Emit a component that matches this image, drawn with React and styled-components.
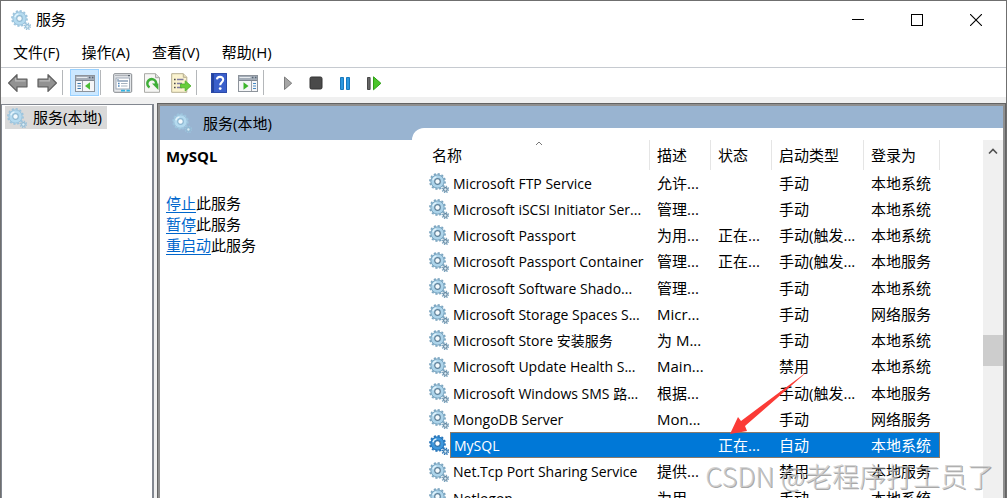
import React, { useState } from "react";
import styled, { createGlobalStyle } from "styled-components";

const services = [
  { name: "Microsoft FTP Service", desc: "允许...", state: "", start: "手动", logon: "本地系统" },
  { name: "Microsoft iSCSI Initiator Ser...", desc: "管理...", state: "", start: "手动", logon: "本地系统" },
  { name: "Microsoft Passport", desc: "为用...", state: "正在...", start: "手动(触发...", logon: "本地系统" },
  { name: "Microsoft Passport Container", desc: "管理...", state: "正在...", start: "手动(触发...", logon: "本地服务" },
  { name: "Microsoft Software Shado...", desc: "管理...", state: "", start: "手动", logon: "本地系统" },
  { name: "Microsoft Storage Spaces S...", desc: "Micr...", state: "", start: "手动", logon: "网络服务" },
  { name: "Microsoft Store 安装服务", desc: "为 M...", state: "", start: "手动", logon: "本地系统" },
  { name: "Microsoft Update Health S...", desc: "Main...", state: "", start: "禁用", logon: "本地系统" },
  { name: "Microsoft Windows SMS 路...", desc: "根据...", state: "", start: "手动(触发...", logon: "本地服务" },
  { name: "MongoDB Server", desc: "Mon...", state: "", start: "手动", logon: "网络服务" },
  { name: "MySQL", desc: "", state: "正在...", start: "自动", logon: "本地系统" },
  { name: "Net.Tcp Port Sharing Service", desc: "提供...", state: "", start: "禁用", logon: "本地服务" },
  { name: "Netlogon", desc: "为用...", state: "", start: "手动", logon: "本地系统" },
];

function Gear({ active, faded }) {
  const teeth = active ? "#2674b8" : faded ? "#9cc3dc" : "#7aa4bf";
  const body = active ? "#3d97dd" : faded ? "#b4daef" : "#add4ea";
  const inner = active ? "#2a6ea8" : faded ? "#8fb9d3" : "#5b7f99";
  return (
    <GearSvg viewBox="0 0 20 20" aria-hidden="true">
      <circle cx="8.5" cy="8.5" r="7.4" fill="none" stroke={teeth} strokeWidth="2" strokeDasharray="2.1 1.77" />
      <circle cx="8.5" cy="8.5" r="5" fill="none" stroke={body} strokeWidth="4" />
      <circle cx="8.5" cy="8.5" r="6.6" fill="none" stroke={teeth} strokeWidth="1" />
      <circle cx="8.5" cy="8.5" r="2.8" fill={active ? "#fff" : "#f4fafd"} stroke={inner} strokeWidth="1.2" />
      <path d="M3.8 7.2a5 5 0 0 1 3.6-3.4" fill="none" stroke="#e6f5fc" strokeWidth="1.3" />
      <circle cx="16.4" cy="16.4" r="3" fill="none" stroke={teeth} strokeWidth="1.6" strokeDasharray="1.3 1.05" />
      <circle cx="16.4" cy="16.4" r="1.8" fill="#dceef7" stroke={inner} strokeWidth="1.1" />
    </GearSvg>
  );
}

function ArrowIcon({ right }) {
  return (
    <svg width="20" height="20" viewBox="0 0 20 20">
      <path
        d={right ? "M19.4 10L11 1.6v4.6H1v7.6h10v4.6z" : "M.6 10L9 1.6v4.6h10v7.6H9v4.6z"}
        fill="#929292"
        stroke="#5f5f5f"
        strokeWidth="1.2"
        strokeLinejoin="round"
      />
      <path d={right ? "M2.5 7.8h9.8V5" : "M17.5 7.8H7.7V5"} fill="none" stroke="#bcbcbc" strokeWidth="1.2" />
    </svg>
  );
}

// window frame with a side pane, used by the two "show pane" buttons
function PaneIcon({ flip }) {
  return (
    <svg width="20" height="20" viewBox="0 0 20 20">
      <rect x="0.5" y="2.5" width="19" height="16" fill="#f5f6f8" stroke="#8d939b" />
      <rect x="1" y="3" width="18" height="4" fill="#a4adb8" />
      <path d="M1.5 4.5h11" stroke="#e7ebef" />
      <path d="M14 4.5h1.4M17 4.5h1.4" stroke="#566474" strokeWidth="1.4" />
      <path d="M1 7.5h18" stroke="#7f8791" />
      {flip ? (
        <>
          <path d="M13.5 8v10" stroke="#9ba1a9" />
          <path d="M15 10.5h3M15 13h3M15 15.5h3" stroke="#4689c4" strokeWidth="1.2" />
          <path d="M5.5 9.3v7.4l5-3.7z" fill="#3cb52b" />
        </>
      ) : (
        <>
          <path d="M7.5 8v10" stroke="#9ba1a9" />
          <path d="M2.5 10.5h3.4M2.5 13h3.4M2.5 15.5h3.4" stroke="#3b78ad" strokeWidth="1.2" />
          <path d="M15 9.3v7.4L10 13z" fill="#4bbd35" />
        </>
      )}
    </svg>
  );
}

function PropertiesIcon() {
  return (
    <svg width="20" height="20" viewBox="0 0 20 20">
      <rect x="0.7" y="0.7" width="18" height="18.6" rx="1" fill="#e4e7ea" stroke="#85898e" />
      <path d="M2 2.6h15" stroke="#a9aeb4" />
      <path d="M15 2.6h2" stroke="#59636e" strokeWidth="1.4" />
      <rect x="3" y="5" width="13.5" height="11" fill="#fff" stroke="#9ba6b3" />
      <path d="M5 6v2h10" fill="none" stroke="#8aa0b8" strokeWidth="1.4" />
      <path d="M5 10.5h1.6M5 13h1.6" stroke="#4d85ba" strokeWidth="1.3" />
      <path d="M8 10.5h6.5M8 13h6.5" stroke="#a7b3bf" strokeWidth="1.2" />
      <path d="M8 17.6h4M13.5 17.6h3.4" stroke="#30b3e2" strokeWidth="1.6" />
    </svg>
  );
}

function RefreshIcon() {
  return (
    <svg width="20" height="20" viewBox="0 0 20 20">
      <path d="M2.5.7h11l4 4v14.6h-15z" fill="#f6f6f4" stroke="#a9a9a5" />
      <path d="M13.5.7v4h4" fill="#ddd" stroke="#a9a9a5" />
      <path d="M7.6 14.4A4.4 4.4 0 1 1 14 11.6" fill="none" stroke="#3fae38" strokeWidth="2.6" />
      <path d="M10 10.6h6.4v6.4z" fill="#3fae38" />
    </svg>
  );
}

function ExportIcon() {
  return (
    <svg width="20" height="20" viewBox="0 0 20 20">
      <path d="M.7.7h11.6l3.5 3.6v15H.7z" fill="#fbf3cf" stroke="#b5ad90" />
      <path d="M12.3.7v3.6h3.5" fill="#e8dfba" stroke="#b5ad90" />
      <path d="M3 6.5h1.6M3 10.5h1.6M3 14.5h1.6" stroke="#4a4a4a" strokeWidth="1.6" />
      <path d="M6 6.5h6.5M6 10.5h5M6 14.5h5" stroke="#7d7aa0" strokeWidth="1.3" />
      <path d="M9.5 11h4.7V7.8L20 12.9 14.2 18v-3.2H9.5z" fill="#67ce3b" stroke="#4aac28" strokeWidth="0.8" />
    </svg>
  );
}

function HelpIcon() {
  return (
    <svg width="20" height="20" viewBox="0 0 20 20">
      <rect x="2" y="0" width="16" height="20" fill="#3a5fcb" />
      <path d="M2 0h3v20H2z" fill="#2443a0" />
      <path d="M2.5.5h15v19h-15z" fill="none" stroke="#2c4aa8" />
      <path d="M8 6.4c.1-3.4 6.3-3.3 6.2.2 0 2.6-3 2.8-3 5.6" fill="none" stroke="#fff" strokeWidth="2.1" />
      <circle cx="11.2" cy="15.6" r="1.4" fill="#fff" />
    </svg>
  );
}

function PlayIcon() {
  return (
    <svg width="20" height="20" viewBox="0 0 20 20">
      <path d="M8.5 4v12.5l7.2-6.3z" fill="#a6a6a6" stroke="#7c7c7c" strokeLinejoin="round" />
    </svg>
  );
}

function StopIcon() {
  return (
    <svg width="20" height="20" viewBox="0 0 20 20">
      <rect x="5" y="4" width="12" height="12" rx="1.5" fill="#4a4a4a" stroke="#333" />
    </svg>
  );
}

function PauseIcon() {
  return (
    <svg width="20" height="20" viewBox="0 0 20 20">
      <path d="M6.5 4.5h3v12h-3zM12.5 4.5h3v12h-3z" fill="#2b98e0" stroke="#1778bd" />
    </svg>
  );
}

function RestartIcon() {
  return (
    <svg width="20" height="20" viewBox="0 0 20 20">
      <path d="M4.5 4.5h2.6v12H4.5z" fill="#666" stroke="#484848" />
      <path d="M10.5 3.8v13l7.4-6.5z" fill="#4cc52c" stroke="#2ea016" strokeLinejoin="round" />
    </svg>
  );
}

function App() {
  const [selected, setSelected] = useState("MySQL");

  return (
    <Window>
      <GlobalStyle />
      <TitleBar>
        <Gear faded />
        <Title>服务</Title>
        <WindowButton aria-label="最小化">
          <svg width="12" height="12" viewBox="0 0 12 12" shapeRendering="crispEdges">
            <path d="M0 5.5h12" stroke="#000" />
          </svg>
        </WindowButton>
        <WindowButton aria-label="最大化">
          <svg width="12" height="12" viewBox="0 0 12 12" shapeRendering="crispEdges">
            <path d="M.5.5h11v11H.5z" fill="none" stroke="#000" />
          </svg>
        </WindowButton>
        <WindowButton aria-label="关闭">
          <svg width="12" height="12" viewBox="0 0 12 12">
            <path d="M0 0l12 12M12 0L0 12" stroke="#000" strokeWidth="1.1" />
          </svg>
        </WindowButton>
      </TitleBar>

      <MenuBar>
        <MenuButton>文件(F)</MenuButton>
        <MenuButton>操作(A)</MenuButton>
        <MenuButton>查看(V)</MenuButton>
        <MenuButton>帮助(H)</MenuButton>
      </MenuBar>

      <ToolBar>
        <ToolButton aria-label="后退"><ArrowIcon /></ToolButton>
        <ToolButton aria-label="前进"><ArrowIcon right /></ToolButton>
        <Separator />
        <ToolButton $pressed aria-label="显示/隐藏控制台树"><PaneIcon /></ToolButton>
        <Separator />
        <ToolButton aria-label="属性"><PropertiesIcon /></ToolButton>
        <ToolButton aria-label="刷新"><RefreshIcon /></ToolButton>
        <ToolButton aria-label="导出列表"><ExportIcon /></ToolButton>
        <Separator />
        <ToolButton aria-label="帮助"><HelpIcon /></ToolButton>
        <ToolButton aria-label="显示/隐藏操作窗格"><PaneIcon flip /></ToolButton>
        <Separator />
        <ToolButton aria-label="启动服务"><PlayIcon /></ToolButton>
        <ToolButton aria-label="停止服务"><StopIcon /></ToolButton>
        <ToolButton aria-label="暂停服务"><PauseIcon /></ToolButton>
        <ToolButton aria-label="重启服务"><RestartIcon /></ToolButton>
      </ToolBar>

      <Panes>
        <TreePane>
          <TreeItem>
            <Gear faded />
            服务(本地)
          </TreeItem>
        </TreePane>

        <MainPane>
          <PaneHeader>
            <PaneTitle>
              <Gear faded />
              服务(本地)
            </PaneTitle>
            <ListTab />
          </PaneHeader>

          <Content>
            <Details>
              <ServiceName>{selected}</ServiceName>
              <p><a href="#">停止</a>此服务</p>
              <p><a href="#">暂停</a>此服务</p>
              <p><a href="#">重启动</a>此服务</p>
            </Details>

            <ListArea>
              <ServiceTable>
                <colgroup>
                  <Col $width={21} />
                  <Col $width={200} />
                  <Col $width={61} />
                  <Col $width={61} />
                  <Col $width={92} />
                  <Col $width={76} />
                </colgroup>
                <thead>
                  <tr>
                    <HeadCell colSpan={2} $first>
                      名称
                      <SortMark width="8" height="5" viewBox="0 0 8 5">
                        <path d="M1 4l3-3 3 3" fill="none" stroke="#777" />
                      </SortMark>
                    </HeadCell>
                    <HeadCell>描述</HeadCell>
                    <HeadCell>状态</HeadCell>
                    <HeadCell>启动类型</HeadCell>
                    <HeadCell>登录为</HeadCell>
                  </tr>
                </thead>
                <tbody>
                  {services.map((s) => (
                    <Row key={s.name} $selected={s.name === selected} onClick={() => setSelected(s.name)}>
                      <IconCell><Gear active={s.name === selected} /></IconCell>
                      <NameCell>{s.name}</NameCell>
                      <Cell>{s.desc}</Cell>
                      <Cell>{s.state}</Cell>
                      <Cell>{s.start}</Cell>
                      <Cell>{s.logon}</Cell>
                    </Row>
                  ))}
                </tbody>
              </ServiceTable>

              <Pointer width="80" height="64" viewBox="0 0 80 64">
                <path d="M1 63L9 46l3 4L79 0 16 55l2 5z" fill="#fb3b36" />
              </Pointer>
            </ListArea>

            <ScrollBar>
              <ScrollButton aria-label="向上滚动">
                <svg width="10" height="7" viewBox="0 0 10 7">
                  <path d="M1 5.5l4-4 4 4" fill="none" stroke="#505050" strokeWidth="1.6" />
                </svg>
              </ScrollButton>
              <ScrollThumb />
            </ScrollBar>
          </Content>
        </MainPane>
      </Panes>

      <Watermark>CSDN @老程序打工员了</Watermark>
    </Window>
  );
}

export default App;

const GlobalStyle = createGlobalStyle`
  * {
    box-sizing: border-box;
  }

  body {
    margin: 0;
    overflow: hidden;
    color: #000;
    font-family: "Open Sans", "Noto Sans CJK SC", sans-serif;
    font-size: 15px;
    line-height: 21px;
  }

  button {
    padding: 0;
    border: 0;
    background: none;
    color: inherit;
    font: inherit;
  }

  svg {
    display: block;
    flex: none;
  }

  p {
    margin: 0;
  }
`;

const Window = styled.div`
  position: relative;
  display: flex;
  flex-direction: column;
  height: 100vh;
  border: 1px solid #6f6f6f;
  border-bottom: 0;
  background: #fff;
  overflow: hidden;
`;

const GearSvg = styled.svg`
  width: 20px;
  height: 20px;
`;

const TitleBar = styled.header`
  display: flex;
  align-items: center;
  flex: none;
  height: 37px;
  padding: 0 1px 0 10px;
`;

const Title = styled.div`
  flex: 1;
  padding-left: 5px;
`;

const WindowButton = styled.button`
  display: flex;
  align-items: center;
  justify-content: center;
  width: 59px;
  height: 37px;
`;

const MenuBar = styled.nav`
  display: flex;
  align-items: center;
  flex: none;
  gap: 22px;
  height: 30px;
  padding-left: 12px;
  border-bottom: 1px solid #c6cad0;
`;

const MenuButton = styled.button`
  white-space: nowrap;
`;

const ToolBar = styled.div`
  display: flex;
  align-items: center;
  flex: none;
  height: 29px;
  padding-left: 2px;
`;

const ToolButton = styled.button`
  display: flex;
  align-items: center;
  justify-content: center;
  width: 29px;
  height: 27px;
  border: 1px solid ${(props) => (props.$pressed ? "#99d1ff" : "transparent")};
  background: ${(props) => (props.$pressed ? "#cce8ff" : "transparent")};
`;

const Separator = styled.span`
  width: 1px;
  height: 25px;
  margin: 0 7px 0 1px;
  background: #b4b7ba;
`;

const Panes = styled.div`
  display: flex;
  flex: 1;
  gap: 4px;
  min-height: 0;
  padding: 7px 1px 0 0;
  background: #f0f0f0;
`;

const TreePane = styled.aside`
  flex: none;
  width: 153px;
  padding: 1px 3px;
  border: 1px solid #828790;
  border-width: 1px 2px 0 1px;
  background: #fff;
`;

const TreeItem = styled.button`
  display: flex;
  align-items: center;
  gap: 6px;
  height: 23px;
  padding: 0 5px 0 2px;
  background: #d9d9d9;
  white-space: nowrap;
`;

const MainPane = styled.main`
  display: flex;
  flex: 1;
  flex-direction: column;
  min-width: 0;
  border: 2px solid #8f8f8f;
  border-bottom: 0;
  outline: 1px solid #646464;
  background: #fff;
`;

const PaneHeader = styled.div`
  display: flex;
  align-items: flex-end;
  flex: none;
  height: 34px;
  background: #99b4d1;
`;

const PaneTitle = styled.div`
  display: flex;
  align-items: center;
  flex: none;
  gap: 11px;
  width: 252px;
  height: 34px;
  padding-left: 12px;
`;

const ListTab = styled.div`
  flex: 1;
  height: 12px;
  border-top-left-radius: 12px;
  background: #fff;
`;

const Content = styled.div`
  display: flex;
  flex: 1;
  min-height: 0;
`;

const Details = styled.section`
  flex: none;
  width: 269px;
  padding: 6px;

  a {
    color: #0066cc;
    text-underline-offset: 3px;
  }
`;

const ServiceName = styled.h1`
  margin: 0 0 26px;
  font-size: 15px;
  line-height: 21px;
`;

const ListArea = styled.section`
  position: relative;
  flex: 1;
  min-width: 0;
  overflow: hidden;
`;

const ServiceTable = styled.table`
  width: 511px;
  table-layout: fixed;
  border-collapse: separate;
  border-spacing: 0;
  white-space: nowrap;
`;

const Col = styled.col`
  width: ${(props) => props.$width}px;
`;

const HeadCell = styled.th`
  position: relative;
  height: 30px;
  padding: 0 0 0 ${(props) => (props.$first ? 3 : 7)}px;
  border-right: 1px solid #e5e5e5;
  font-weight: 400;
  text-align: left;
`;

const SortMark = styled.svg`
  position: absolute;
  top: 1px;
  left: 50%;
  transform: translateX(-50%);
`;

const Cell = styled.td`
  padding: 0 0 0 7px;
  overflow: hidden;
`;

const IconCell = styled.td`
  padding: 0;
`;

const NameCell = styled.td`
  padding: 0 0 0 3px;
  font-size: 14px;
  overflow: hidden;
`;

const Row = styled.tr`
  height: 26px;

  &:nth-child(4n) {
    height: 27px;
  }

  td:not(:first-child) {
    background: ${(props) => (props.$selected ? "#0078d7" : "transparent")};
    color: ${(props) => (props.$selected ? "#fff" : "inherit")};
    border: 0 solid #8a7a6a;
    border-width: ${(props) => (props.$selected ? "1px 0" : "0")};
  }

  td:nth-child(2) {
    border-left-width: ${(props) => (props.$selected ? "1px" : "0")};
  }

  td:last-child {
    border-right-width: ${(props) => (props.$selected ? "1px" : "0")};
  }
`;

const Pointer = styled.svg`
  position: absolute;
  top: 231px;
  left: 300px;
`;

const ScrollBar = styled.div`
  flex: none;
  width: 20px;
  background: #f0f0f0;
`;

const ScrollButton = styled.button`
  display: flex;
  align-items: center;
  justify-content: center;
  width: 20px;
  height: 22px;
`;

const ScrollThumb = styled.div`
  height: 31px;
  margin-top: 173px;
  background: #cdcdcd;
`;

const Watermark = styled.div`
  position: absolute;
  right: 12px;
  bottom: 2px;
  color: rgba(200, 200, 200, 0.8);
  font-family: "Noto Sans CJK SC", sans-serif;
  font-size: 27px;
  font-weight: 300;
  line-height: 40px;
  text-shadow: 1px 1px 0 rgba(110, 110, 110, 0.6);
  white-space: nowrap;
  pointer-events: none;
`;
